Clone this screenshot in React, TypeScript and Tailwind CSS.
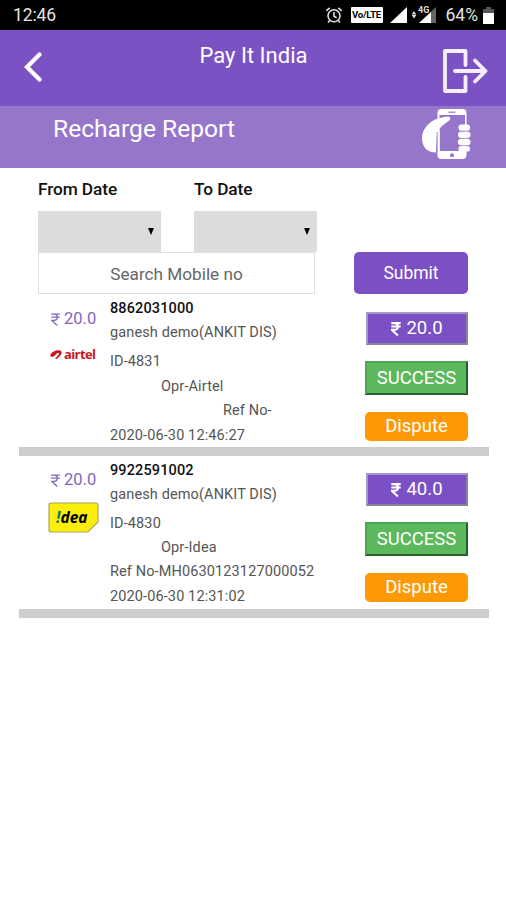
import React from 'react';

interface Recharge {
  mobile: string;
  name: string;
  id: string;
  operator: 'Airtel' | 'Idea';
  refNo: string;
  date: string;
  amount: string;
  total: string;
}

const recharges: Recharge[] = [
  {
    mobile: '8862031000',
    name: 'ganesh demo(ANKIT DIS)',
    id: '4831',
    operator: 'Airtel',
    refNo: '',
    date: '2020-06-30 12:46:27',
    amount: '20.0',
    total: '20.0',
  },
  {
    mobile: '9922591002',
    name: 'ganesh demo(ANKIT DIS)',
    id: '4830',
    operator: 'Idea',
    refNo: 'MH0630123127000052',
    date: '2020-06-30 12:31:02',
    amount: '20.0',
    total: '40.0',
  },
];

const RupeeIcon: React.FC<{ className: string; weight: number }> = ({ className, weight }) => (
  <svg viewBox="0 0 10 15" className={className} fill="none" stroke="currentColor" strokeWidth={weight}>
    <path d="M0 1.2h10M0 4.8h10M0 1.2h3.2c5.2 0 5.2 7.2 0 7.2H0.6L7 14.4" />
  </svg>
);

const StatusBar = () => (
  <div className="flex h-[30px] items-center bg-black pl-[13px] pr-3 text-[17.5px] text-[#e4e4e4]">
    <span className="grow tracking-[-0.1px]">12:46</span>
    <svg viewBox="0 0 18 18" className="mr-[8px] h-[18px] w-[18px]" fill="none" stroke="#ddd" strokeWidth="1.6">
      <circle cx="9" cy="9.7" r="6" />
      <path d="M9 6v4.2l2.6 1.6M1.3 4.8l3.4-3M16.7 4.8l-3.4-3M4.6 14.6l-1.5 1.9M13.4 14.6l1.5 1.9" />
    </svg>
    <span className="mr-[7px] flex h-[16px] w-[32px] items-center justify-center rounded-[1px] bg-white text-[9.5px] font-bold tracking-[-0.2px] text-black">
      Vo/LTE
    </span>
    <svg viewBox="0 0 17 16" className="mr-[4px] h-4 w-[17px]">
      <path d="M17 0v16H0z" fill="#fff" />
    </svg>
    <svg viewBox="0 0 26 20" className="mr-[9px] h-5 w-[26px]">
      <path d="M3 6l2.4 3.500H.6zM3 13.500l2.400-3.500H.6z" fill="#ddd" />
      <path d="M8 18L25 2v16z" fill="#666" />
      <path d="M8 18L20 7v11z" fill="#fff" />
      <text x="7" y="8" fontSize="9" fontWeight="700" fill="#ddd">4G</text>
    </svg>
    <span className="mr-[5px]">64%</span>
    <svg viewBox="0 0 11 17" className="h-[17px] w-[11px]">
      <path d="M3 0h5v2h3v4H0V2h3z" fill="#555" />
      <path d="M0 6h11v11H0z" fill="#fff" />
    </svg>
  </div>
);

const Header = () => (
  <header className="flex h-[76px] justify-between bg-[#7b52c4] pl-[24px] pr-[18px] text-white">
    <svg viewBox="0 0 18 30" className="mt-[22px] h-[30px] w-[18px]" fill="none" stroke="#fff" strokeWidth="4.2" strokeLinecap="round">
      <path d="M15.5 2.5L3 15l12.5 12.5" />
    </svg>
    <h1 className="ml-[23px] mt-[12px] text-[22px] leading-7">Pay It India</h1>
    <svg viewBox="0 0 46 46" className="mt-[18px] h-[46px] w-[46px]" fill="none" stroke="#f6effb" strokeWidth="3.8" strokeLinejoin="round" strokeLinecap="round">
      <path d="M23.5 17V3H3v40h20.5V29" />
      <path d="M13 23h30M33 12.5L43.5 23L33 33.5" />
    </svg>
  </header>
);

const HandPhoneIcon = () => (
  <svg viewBox="0 0 50 52" className="h-[52px] w-[50px]">
    <rect x="15.500" y="1" width="29" height="50" rx="4" fill="#fff" />
    <rect x="17.500" y="7" width="25.500" height="36" fill="#9676cb" />
    <path d="M26.500 4.200h7" stroke="#9676cb" strokeWidth="1.2" />
    <circle cx="30" cy="47.3" r="2" fill="#9676cb" />
    <path
      d="M14 44.500C5 44.500 0 39 0 30c0-8 6-15 13-18.500 4-1 8-2.500 12.500-3 3.500 0 3.500 3 1 4.500l-6 4.500c-3 2.500-4.500 5-5.500 9z"
      fill="#fff"
    />
    <path d="M15.2 24v20" stroke="#9676cb" strokeWidth="1" />
    <path d="M16.700 22v24" stroke="#fff" strokeWidth="2" />
    <g fill="#fff">
      <rect x="36.500" y="16.500" width="11.500" height="6.200" rx="2.800" />
      <rect x="36" y="23.700" width="12.500" height="6.200" rx="2.800" />
      <rect x="36" y="30.900" width="12.500" height="6.200" rx="2.800" />
      <rect x="36.500" y="38.100" width="11.500" height="5.500" rx="2.600" />
    </g>
    <path d="M38 23.200h9M38 30.400h9M38 37.600h9" stroke="#b9a3de" strokeWidth="1" />
  </svg>
);

const DateField: React.FC<{ label: string }> = ({ label }) => (
  <label className="block w-[123px]">
    <span className="block h-[22px] whitespace-nowrap text-[17.3px] font-medium leading-[22px] tracking-[-0.1px] text-[#111]">{label}</span>
    <span className="mt-[11px] flex h-[41px] items-center justify-end bg-[#dcdcdc] pr-[7px]">
      <svg viewBox="0 0 7 7" className="h-[7px] w-[6px]" preserveAspectRatio="none">
        <path d="M0 0h7L3.5 7z" fill="#000" />
      </svg>
    </span>
  </label>
);

const OperatorLogo: React.FC<{ operator: Recharge['operator'] }> = ({ operator }) => {
  if (operator === 'Airtel') {
    return (
      <div className="mt-[17px] flex h-4 items-center pl-[2px] text-[#c8171e]">
        <svg viewBox="0 0 12 12" className="mr-[2px] h-3 w-3" fill="currentColor">
          <path d="M.5 5.500C2 2.500 6 .8 9 1.200c3 .4 3.400 3 1.500 5C9.300 7.600 7.800 8.600 7 10H5.200c.6-2 2.600-3 3.600-4.600.7-1.300-.6-1.700-2-1C5.600 5.200 4.500 7.600 2.500 7.800.8 8 .1 6.800.5 5.500z" />
        </svg>
        <span className="font-['Open_Sans'] text-[13px] font-bold tracking-[-0.6px]">airtel</span>
      </div>
    );
  }
  return (
    <div className="relative mt-[11px] h-[31px] w-[51px]">
      <svg viewBox="0 0 51 31" className="absolute inset-0 h-[31px] w-[51px]">
        <path d="M3 1h45q2 0 2 2v17L40 30H3q-2 0-2-2V3q0-2 2-2z" fill="#fbee0b" stroke="#aaa36a" strokeWidth="1.2" />
      </svg>
      <span className="absolute left-[8px] top-[5px] font-['Open_Sans'] text-[15.5px] font-bold italic leading-5 text-black">
        <span className="text-[#08737a]">!</span>dea
      </span>
    </div>
  );
};

const RechargeRow: React.FC<{ item: Recharge }> = ({ item }) => (
  <li className="ml-[19px] mr-[17px] flex h-[161.3px] border-b-[9px] border-[#cdcdcd]">
    <div className="w-[91px] shrink-0 pl-[29px] pt-[13.8px]">
      <div className="flex h-[21px] items-center pl-[3px] text-[16.5px] text-[#8267bd]">
        <RupeeIcon className="mr-[4px] h-[13px] w-[9px]" weight={1.5} />
        {item.amount}
      </div>
      <OperatorLogo operator={item.operator} />
    </div>
    <div className="grow whitespace-nowrap pt-[2.4px] text-[14.5px] leading-6 tracking-[0.12px] text-[#555]">
      <div className="font-medium text-[#111]">{item.mobile}</div>
      <div>{item.name}</div>
      <div className="mt-[5px]">ID-{item.id}</div>
      <div className="mt-[0.3px] pl-[51px]">Opr-{item.operator}</div>
      <div className={item.refNo ? 'mt-[0.5px]' : 'mt-[0.5px] pl-[113px]'}>Ref No-{item.refNo}</div>
      <div className="mt-[0.6px]">{item.date}</div>
    </div>
    <div className="mr-[21px] w-[103px] shrink-0 pt-[17.2px] text-center text-white">
      <div className="ml-[1px] flex h-[33px] items-center justify-center border-2 border-[#a995cc] border-b-[#8b819a] border-r-[#8b819a] bg-[#7b50c5] text-[18.5px]">
        <RupeeIcon className="mr-[5px] h-[14px] w-[10px]" weight={2.2} />
        {item.total}
      </div>
      <div className="mt-[16px] h-[34px] border-2 border-[#4ea653] border-b-[#28602b] border-r-[#28602b] bg-[#5cb85c] text-[18.5px] leading-[31px]">
        SUCCESS
      </div>
      <div className="mt-[17px] h-[29px] rounded-[5px] bg-[#ff9805] text-[18.5px] leading-[29px]">Dispute</div>
    </div>
  </li>
);

const App: React.FC = () => {
  return (
    <div className="h-[900px] w-[506px] overflow-hidden bg-white font-[Roboto,sans-serif]">
      <StatusBar />
      <Header />
      <div className="flex h-[62px] justify-between bg-[#9676cb] pl-[53px] pr-[34px] text-white">
        <h2 className="mt-[8px] text-[24.6px] leading-[30px]">Recharge Report</h2>
        <div className="mt-[2px]">
          <HandPhoneIcon />
        </div>
      </div>

      <form className="h-[127px] pl-[38px] pt-[10px]">
        <div className="flex gap-[33px]">
          <DateField label="From Date" />
          <DateField label="To Date" />
        </div>
        <div className="flex">
          <div className="h-[42px] w-[277px] border border-[#e0e0e0] text-center text-[17.2px] leading-[42px] text-[#666]">
            Search Mobile no
          </div>
          <button type="button" className="ml-[39px] h-[42px] w-[114px] rounded-[5px] bg-[#7b50c5] text-[17.5px] text-white">
            Submit
          </button>
        </div>
      </form>

      <ul>
        {recharges.map((item) => (
          <RechargeRow key={item.id} item={item} />
        ))}
      </ul>
    </div>
  );
};

export default App;
